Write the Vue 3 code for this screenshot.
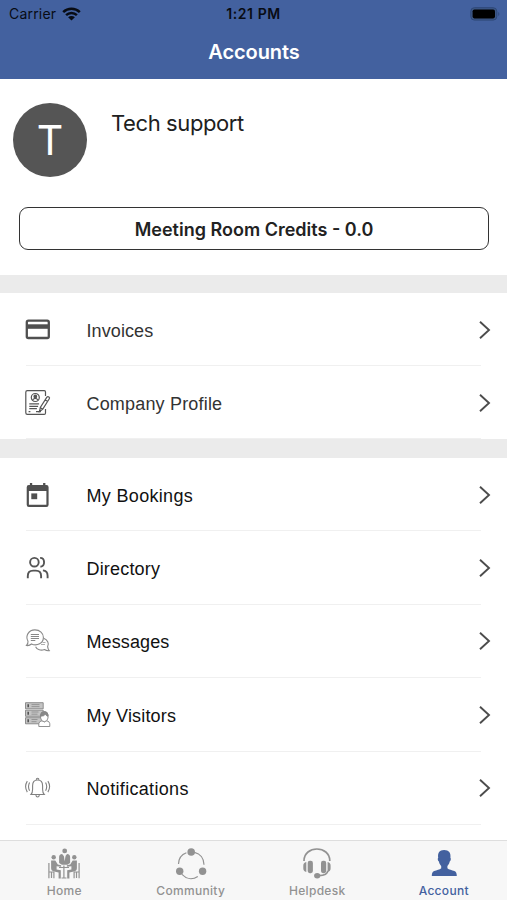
<template>
  <div class="screen">
    <header class="header">
      <div class="status-bar">
        <div class="carrier">
          <span>Carrier</span>
          <svg class="wifi" viewBox="0 0 19 14">
            <path d="M1.2 5.2C5.8.7 13.2.7 17.8 5.2M4.1 8.2c3-2.9 7.8-2.9 10.8 0" fill="none" stroke="#080c14" stroke-width="2.5" />
            <path d="M9.5 13.6 6.1 10.3c1.9-1.7 4.9-1.7 6.8 0z" fill="#080c14" />
          </svg>
        </div>
        <span class="time">1:21 PM</span>
        <svg class="battery" viewBox="0 0 30 14">
          <rect x=".8" y=".7" width="26" height="12.4" rx="3.6" fill="#3d5785" stroke="#2e4878" />
          <rect x="2.6" y="2.4" width="22.4" height="9" rx="1.8" fill="#000" />
          <path d="M28.3 5v4c1.4-.6 1.4-3.4 0-4z" fill="#2e4878" />
        </svg>
      </div>
      <h1 class="title">Accounts</h1>
    </header>

    <section class="profile">
      <div class="user">
        <div class="avatar">T</div>
        <div class="name">Tech support</div>
      </div>
      <button class="credits">Meeting Room Credits - 0.0</button>
    </section>

    <ul v-for="(group, i) in groups" :key="i" class="group" :class="{ soft: i === 0 }">
      <li v-for="item in group" :key="item.icon" class="row">
        <svg class="row-icon" viewBox="0 0 28 28">
          <g v-if="item.icon === 'card'">
            <rect x="2.8" y="4.6" width="22" height="17.4" rx="1.6" fill="none" stroke="#505050" stroke-width="2.3" />
            <path d="M2.5 8.300h22.600v4.500H2.500z" fill="#505050" />
          </g>
          <g v-else-if="item.icon === 'profile'" fill="none" stroke="#555" stroke-width="1.200">
            <path d="M21.500 7V3q0-1.300-1.300-1.300H3.300Q1.800 1.700 1.800 3.200v20.600q0 1.600 1.500 1.600h16.800q1.400 0 1.400-1.500V20" />
            <circle cx="11.300" cy="8.500" r="4" />
            <circle cx="11.300" cy="7.400" r="1.300" fill="#555" />
            <path d="M8.600 11q2.700-3.400 5.400 0M5.300 14.800h9.800M5.300 17.300h8.800M5.300 19.700h7.600M4.600 22.700h1.800M12 22.700h5" />
            <path d="m15.500 22.600.8-4.100 6.600-10.300q.8-1.100 2-.3 1.100.8.400 1.900l-6.500 10.300zm5.700-11.700 2.600 1.700M16.300 18.700l2.300 1.400" fill="#fff" />
          </g>
          <g v-else-if="item.icon === 'calendar'">
            <path d="M4.800 4h1.100V2h2.300v2h10.900V2h2.300v2h1.100q2.100 0 2.100 2.200v17.500q0 2.200-2.200 2.200H4.900q-2.200 0-2.200-2.200V6.200Q2.700 4 4.800 4zm.1 6.100v13.700h17.500V10.100z" fill="#505050" fill-rule="evenodd" />
            <path d="M7.300 12.400h5.900v5.800H7.300z" fill="#505050" />
          </g>
          <g v-else-if="item.icon === 'people'" fill="none" stroke="#555" stroke-width="1.900">
            <circle cx="10.400" cy="8.200" r="4.300" />
            <path d="M16.100 3.900c5.200 0 5.300 8.300.3 8.800M3.800 24.200v-2.300q0-5.300 5.300-5.300h2.700q5.300 0 5.300 5.300v2.300M18.900 16.400q4.700.4 4.700 5.300v2.500" />
          </g>
          <g v-else-if="item.icon === 'chat'" fill="none" stroke="#888" stroke-width="1.100">
            <path d="M19.600 11.300c3.700 1.200 6 4.900 4 8.400q.4 2.700 1.600 3.900-2.500.4-4.700-1.100c-3.500 1.500-7.600.3-8.900-2.700" />
            <path d="M4 14.300C1 9.100 4.600 2.900 10.900 2.900c5 0 8.500 3.200 8.500 7.500 0 5.800-6.200 9.100-11.900 6.600q-2.300 2-5 1.500Q4.200 16.900 4 14.300z" fill="#fff" />
            <path d="M6.800 7.500h8.200M6.800 9.500h8.200M6.800 11.500h8.200M6.800 13.500h4.500" />
            <path d="M18.500 15.500h3M17 17.500h4" stroke="#b0b0b0" />
          </g>
          <g v-else-if="item.icon === 'visitors'" stroke="#858585" stroke-width=".9">
            <path d="M1.500 1.700h17.700v6.100H1.500zM1.500 9.200h17.700v6.100H1.500zM1.500 16.700h17.700v6.100H1.500z" fill="#c4c4c4" />
            <path d="M4.200 3.200v3M4.200 10.700v3M4.200 18.200v3" stroke="#555" stroke-width="1.600" />
            <path d="M7.500 3.600h8M7.500 5.600h8M7.500 11h7M7.500 13.200h6M7.500 18.500h6M7.500 20.700h5" stroke="#909090" />
            <path d="M14.800 25.500v-2.800q0-2.300 3.300-3l2.200 1.300 2.200-1.300q3.300.7 3.300 3v2.800z" fill="#fff" />
            <path d="M16.600 17v-2.500q0-3.900 3.700-3.900t3.700 3.900V17q-.6 3.700-3.700 3.700T16.600 17z" fill="#fff" />
            <path d="M16.600 15.200q3.700 0 4.700-2 1 1.800 2.700 2v-1.500q-.5-3.100-3.700-3.100t-3.700 3.100z" fill="#888" />
          </g>
          <g v-else fill="none" stroke="#808080" stroke-width="1.100">
            <path d="M7 20.500q1.600-1.700 1.600-5.300v-3.400q0-5.800 5-5.800t5 5.800v3.400q0 3.600 1.600 5.300zM12.200 5.900q.1-1.700 1.400-1.700T15 5.900M11.800 20.800q.2 2.200 1.800 2.200t1.800-2.200" />
            <path d="M3.300 7.100q-3.400 5.400 0 11M5.600 8.500q-2.200 4.100 0 8.200M23.900 7.100q3.400 5.400 0 11M21.600 8.500q2.200 4.100 0 8.200" />
          </g>
        </svg>
        <span class="label"><span :style="{ letterSpacing: item.spacing }">{{ item.label }}</span></span>
        <svg class="chevron" viewBox="0 0 12 20">
          <path d="m1 1.700 9 8.300-9 8.300" fill="none" stroke="#4c4c4c" stroke-width="1.900" />
        </svg>
      </li>
    </ul>

    <nav class="tabs">
      <a v-for="tab in tabs" :key="tab" class="tab" :class="{ active: tab === 'Account' }">
        <svg class="tab-icon" viewBox="0 0 32 32">
          <g v-if="tab === 'Home'" fill="currentColor">
            <circle cx="16.700" cy="2.900" r="2.400" />
            <circle cx="5.700" cy="9.200" r="2.200" />
            <circle cx="26.300" cy="9.200" r="2.200" />
            <path d="M11.100 15V9q0-2.600 3-2.900l2.500 3 2.500-3q3 .3 3 2.900v6l-2.700 1.700h-5.500z" />
            <path d="m15.900 8 .8-.9.8.9-.8 5.500z" fill="#f7f7f7" />
            <path d="M3.100 12.500h4.200l2.500 4 3.300.7v1.500l-4.500-.5v3.200l4.200.9v8.200h-2.200v-6L5 23.200q-2-.5-1.900-3zM28.900 12.500h-4.200l-2.500 4-3.300.7v1.500l4.500-.5v3.200l-4.200.9v8.200h2.200v-6l5.600-1.300q2-.5 1.900-3z" />
            <path d="M.9 15v15.300M31.100 15v15.300M.9 24h5v6.300M31.100 24h-5v6.300M3.500 24v6M28.500 24v6M11 19.500h10M15.900 17.500v12.800M13.500 30h5" fill="none" stroke="currentColor" stroke-width="1.200" />
          </g>
          <g v-else-if="tab === 'Community'">
            <path d="M3.500 16c.1-5.400 3.200-9.600 7.900-11.300M19.500 4.300c5.600 1.300 9.500 6 9.500 12.500M7 26.400c4.500 4.800 10.500 5.500 15.800 2" fill="none" stroke="currentColor" stroke-width="1.200" />
            <circle cx="16.200" cy="4" r="3.800" fill="currentColor" />
            <circle cx="4.700" cy="23.200" r="3.700" fill="currentColor" />
            <circle cx="27.600" cy="23.200" r="3.700" fill="currentColor" />
          </g>
          <g v-else-if="tab === 'Helpdesk'" fill="currentColor">
            <path d="M3 13C2.900-3 28.900-3 28.800 13M26.800 22.800c-.3 3.400-4 4.900-9 4.900" fill="none" stroke="currentColor" stroke-width="1.700" />
            <rect x="6.700" y="12.800" width="5.200" height="12.400" rx="2.100" />
            <rect x="20" y="12.800" width="5.200" height="12.400" rx="2.100" />
            <path d="M5.300 14v10q-3-.8-3-3.500v-3Q2.300 14.500 5.300 14zM26.600 14v10q3-.8 3-3.500v-3q0-3-3-3.500z" />
            <ellipse cx="16.200" cy="27.800" rx="3.100" ry="2.700" />
          </g>
          <path v-else d="M16.100 1.900c4.800 0 7 3 6.300 7.900.8.500.5 3.200-.7 3.700-.5 2.500-1.500 3.600-2.300 4.500v2.200c1.300 1.500 4.700 1.900 7 2.800 2 .8 2.400 2.800 2.400 5.100H3.800c0-2.300.4-4.300 2.400-5.100 2.300-.9 5.700-1.300 7-2.800V18c-.8-.9-1.800-2-2.300-4.500-1.200-.5-1.500-3.200-.7-3.700-.7-4.900 1.100-7.900 5.900-7.900z" fill="currentColor" />
        </svg>
        <span>{{ tab }}</span>
      </a>
    </nav>
  </div>
</template>

<script setup>
const groups = [
  [
    { label: 'Invoices', icon: 'card', spacing: '0.005em' },
    { label: 'Company Profile', icon: 'profile', spacing: '0.01em' }
  ],
  [
    { label: 'My Bookings', icon: 'calendar', spacing: '0.018em' },
    { label: 'Directory', icon: 'people', spacing: '0.01em' },
    { label: 'Messages', icon: 'chat', spacing: '0.006em' },
    { label: 'My Visitors', icon: 'visitors', spacing: '0.01em' },
    { label: 'Notifications', icon: 'bell', spacing: '0.018em' }
  ]
];

const tabs = ['Home', 'Community', 'Helpdesk', 'Account'];
</script>

<style>
body {
  background: #fff;
}
</style>

<style scoped>
.screen {
  height: 900px;
  display: flex;
  flex-direction: column;
  overflow: hidden;
  background: #fff;
  font-family: Inter, "Liberation Sans", sans-serif;
}

.header {
  flex: none;
  height: 79px;
  background: #43619f;
}

.status-bar {
  height: 27px;
  display: grid;
  grid-template-columns: 1fr auto 1fr;
  align-items: center;
  padding: 0 7px;
  color: #080c14;
  font-size: 14px;
}

.carrier {
  display: flex;
  align-items: center;
  gap: 6px;
  padding-left: 2px;
  letter-spacing: 0.2px;
}

.wifi {
  width: 19px;
  height: 14px;
}

.time {
  font-weight: 600;
  font-size: 14px;
  letter-spacing: 0.6px;
}

.battery {
  width: 30px;
  height: 14px;
  justify-self: end;
}

.title {
  margin: 0;
  padding-left: 1px;
  line-height: 51px;
  text-align: center;
  color: #fff;
  font-size: 20px;
  font-weight: 600;
  letter-spacing: -0.1px;
}

.profile {
  flex: none;
  height: 196px;
  box-sizing: border-box;
  padding: 24px 18px 0 19px;
}

.user {
  display: flex;
  gap: 24px;
  height: 104px;
  margin-left: -6px;
}

.avatar {
  width: 74px;
  height: 74px;
  border-radius: 50%;
  background: #555;
  color: #fff;
  font-size: 41px;
  line-height: 75px;
  text-align: center;
}

.name {
  padding-top: 6px;
  line-height: 28px;
  font-size: 22px;
  letter-spacing: -0.4px;
  color: #202020;
}

.credits {
  width: 100%;
  height: 43px;
  padding: 2px 0 0;
  border: 1.5px solid #333;
  border-radius: 9px;
  background: #fff;
  color: #222;
  font: 600 18px Inter, sans-serif;
}

.group {
  flex: none;
  margin: 0;
  padding: 0;
  list-style: none;
  border-top: 18px solid #ebebeb;
}

.group + .group {
  border-top-width: 19px;
}

.row {
  height: 73.4px;
  display: flex;
  align-items: center;
  padding: 0 16px 0 24px;
  background: linear-gradient(#f0f0f0, #f0f0f0) 26px 100% / calc(100% - 52px) 1px no-repeat;
}

.group.soft .row {
  height: 73px;
}

.row-icon {
  width: 28px;
  height: 28px;
  margin-right: 34.5px;
}

.label {
  flex: 1;
  padding-top: 2px;
  font-family: "Liberation Sans", Arial, sans-serif;
  font-size: 18px;
  line-height: 26px;
  color: #111;
}

.soft .label {
  color: #333;
}

.chevron {
  width: 12px;
  height: 20px;
}

.tabs {
  flex: none;
  height: 60px;
  box-sizing: border-box;
  margin-top: auto;
  padding-left: 1px;
  display: grid;
  grid-template-columns: repeat(4, 1fr);
  border-top: 1px solid #dedede;
  background: #f7f7f7;
}

.tab {
  display: flex;
  flex-direction: column;
  align-items: center;
  padding-top: 7px;
  color: #929292;
  font-size: 12px;
  font-weight: 500;
  line-height: 20px;
  letter-spacing: 0.3px;
}

.tab.active {
  color: #43619f;
}

.tab-icon {
  width: 32px;
  height: 32px;
  margin-bottom: 1px;
}
</style>
